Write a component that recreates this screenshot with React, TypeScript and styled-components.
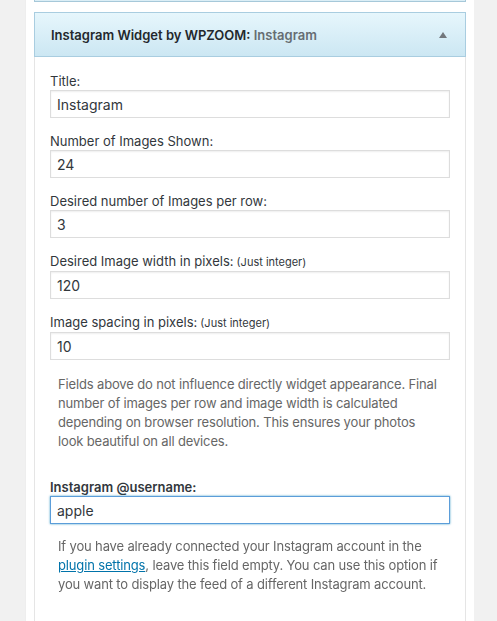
import React, { useEffect, useRef } from "react";
import styled, { createGlobalStyle } from "styled-components";

const GlobalStyle = createGlobalStyle`
    html, body {
        margin: 0;
        padding: 0;
        background: #f1f1f1;
        height: 100%;
        overflow: hidden;
    }
    body {
        font-family: Inter, "Liberation Sans", Arial, sans-serif;
        color: #32373c;
    }
`;

type Field = {
    label: string;
    hint?: string;
    value: string;
};

const fields: Field[] = [
    { label: "Title:", value: "Instagram" },
    { label: "Number of Images Shown:", value: "24" },
    { label: "Desired number of Images per row:", value: "3" },
    { label: "Desired Image width in pixels:", hint: "(Just integer)", value: "120" },
    { label: "Image spacing in pixels:", hint: "(Just integer)", value: "10" },
];

const App: React.FC = () => {
    const usernameInput = useRef<HTMLInputElement>(null);

    useEffect(() => {
        const el = usernameInput.current;
        if (el) {
            el.focus();
            el.setSelectionRange(el.value.length, el.value.length);
        }
    }, []);

    return (
        <>
            <GlobalStyle />
            <Page>
                <Gutter $width={26} />
                <Sidebar>
                    <PrevWidget />
                    <Widget>
                        <Header>
                            <HeaderTitle>
                                Instagram Widget by WPZOOM: <InTitle>Instagram</InTitle>
                            </HeaderTitle>
                            <Arrow />
                        </Header>
                        <Body>
                            {fields.map((f) => (
                                <FormGroup key={f.label}>
                                    <Label>
                                        {f.label}
                                        {f.hint && <Hint> {f.hint}</Hint>}
                                    </Label>
                                    <Input type="text" defaultValue={f.value} />
                                </FormGroup>
                            ))}

                            <Description>
                                Fields above do not influence directly widget appearance. Final number of
                                images per row and image width is calculated depending on browser
                                resolution. This ensures your photos look beautiful on all devices.
                            </Description>

                            <FormGroup $spaced>
                                <Label $strong>Instagram @username:</Label>
                                <Input ref={usernameInput} type="text" defaultValue="apple" $focused />
                            </FormGroup>

                            <Description $tight>
                                If you have already connected your Instagram account in the{" "}
                                <Link href="#">plugin settings</Link>, leave this field empty. You can use
                                this option if you want to display the feed of a different Instagram account.
                            </Description>
                        </Body>
                    </Widget>
                </Sidebar>
                <Gutter />
            </Page>
        </>
    );
};

const Page = styled.div`
    display: flex;
    height: 100vh;
    background: #f1f1f1;
`;

const Gutter = styled.div<{ $width?: number }>`
    flex: ${(p) => (p.$width ? `0 0 ${p.$width}px` : "1")};
    background: #f1f1f1;
`;

const Sidebar = styled.div`
    width: 432px;
    flex: none;
    background: #fff;
    padding: 0 8px;
    display: flex;
    flex-direction: column;
    box-shadow: 0 0 1px rgba(0, 0, 0, 0.08);
`;

const PrevWidget = styled.div`
    height: 1px;
    border: 1px solid #a6c8d9;
    border-top: none;
    background: #dbeef6;
`;

const Widget = styled.div`
    margin-top: 10px;
    flex: 1;
    display: flex;
    flex-direction: column;
    border: 1px solid #e5e5e5;
    border-top: none;
    border-bottom: none;
`;

const Header = styled.div`
    height: 43px;
    margin: 0 -1px;
    display: flex;
    align-items: center;
    justify-content: space-between;
    padding: 0 16px;
    border: 1px solid #a9cde0;
    background: linear-gradient(to bottom, #e6f6fc 0%, #cce7f3 100%);
`;

const HeaderTitle = styled.h3`
    margin: 0;
    font-size: 13px;
    font-weight: 600;
    color: #23282d;
`;

const InTitle = styled.span`
    font-weight: 600;
    color: #666d72;
`;

const Arrow = styled.span`
    width: 0;
    height: 0;
    margin-right: 2px;
    border-left: 4px solid transparent;
    border-right: 4px solid transparent;
    border-bottom: 6px solid #72777c;
`;

const Body = styled.div`
    padding: 15px 15px 0;
    display: flex;
    flex-direction: column;
`;

const FormGroup = styled.div<{ $spaced?: boolean }>`
    display: flex;
    flex-direction: column;
    margin-top: ${(p) => (p.$spaced ? "27px" : "0")};
    margin-bottom: 14px;
    &:nth-child(5) {
        margin-bottom: 15px;
    }
`;

const Label = styled.label<{ $strong?: boolean }>`
    font-size: 13px;
    line-height: 18px;
    font-weight: ${(p) => (p.$strong ? 600 : 400)};
    color: #32373c;
`;

const Hint = styled.small`
    font-size: 11px;
`;

const Input = styled.input<{ $focused?: boolean }>`
    box-sizing: border-box;
    width: 100%;
    height: 28px;
    margin: 0;
    padding: 0 6px;
    font-family: inherit;
    font-size: 14px;
    color: #32373c;
    background: #fff;
    border: 1px solid ${(p) => (p.$focused ? "#5b9dd9" : "#ddd")};
    border-radius: 0;
    outline: none;
    box-shadow: ${(p) =>
        p.$focused
            ? "0 0 2px rgba(30, 140, 190, 0.8)"
            : "inset 0 1px 2px rgba(0, 0, 0, 0.07)"};
`;

const Description = styled.p<{ $tight?: boolean }>`
    margin: ${(p) => (p.$tight ? "-1px 0 0" : "0")};
    padding: 0 9px 0 8px;
    font-size: 13px;
    line-height: 19px;
    letter-spacing: -0.15px;
    color: #666;
`;

const Link = styled.a`
    color: #0073aa;
    text-decoration: underline;
`;

export default App;
